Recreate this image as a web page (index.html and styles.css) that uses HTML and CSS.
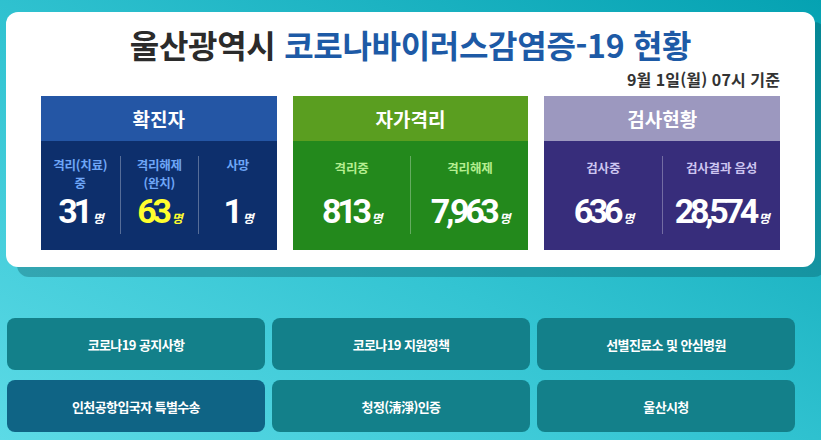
FILE: index.html
```html
<!DOCTYPE html>
<html lang="ko">

<head>
    <meta charset="UTF-8">
    <meta name="viewport" content="width=device-width, initial-scale=1.0">
    <title>울산광역시 코로나바이러스감염증-19 현황</title>
    <link rel="stylesheet" href="styles.css">
</head>

<body>

    <div class="status-card">
        <h1 class="title">울산광역시 <span class="title-blue">코로나바이러스감염증-19 현황</span></h1>
        <p class="base-time">9월 1일(월) 07시 기준</p>

        <div class="stat-row">
            <div class="stat-box confirmed">
                <div class="stat-head">확진자</div>
                <div class="stat-body three">
                    <div class="stat-col">
                        <span class="stat-label">격리(치료)<br>중</span>
                        <span class="stat-num">31<em>명</em></span>
                    </div>
                    <div class="stat-col">
                        <span class="stat-label">격리해제<br>(완치)</span>
                        <span class="stat-num yellow">63<em>명</em></span>
                    </div>
                    <div class="stat-col">
                        <span class="stat-label">사망</span>
                        <span class="stat-num">1<em>명</em></span>
                    </div>
                </div>
            </div>

            <div class="stat-box selfquar">
                <div class="stat-head">자가격리</div>
                <div class="stat-body two">
                    <div class="stat-col">
                        <span class="stat-label">격리중</span>
                        <span class="stat-num">813<em>명</em></span>
                    </div>
                    <div class="stat-col">
                        <span class="stat-label">격리해제</span>
                        <span class="stat-num">7,963<em>명</em></span>
                    </div>
                </div>
            </div>

            <div class="stat-box testing">
                <div class="stat-head">검사현황</div>
                <div class="stat-body two">
                    <div class="stat-col">
                        <span class="stat-label">검사중</span>
                        <span class="stat-num">636<em>명</em></span>
                    </div>
                    <div class="stat-col">
                        <span class="stat-label">검사결과 음성</span>
                        <span class="stat-num">28,574<em>명</em></span>
                    </div>
                </div>
            </div>
        </div>
    </div>

    <div class="link-grid">
        <a class="link-btn" href="#">코로나19 공지사항</a>
        <a class="link-btn" href="#">코로나19 지원정책</a>
        <a class="link-btn" href="#">선별진료소 및 안심병원</a>
        <a class="link-btn dark" href="#">인천공항입국자 특별수송</a>
        <a class="link-btn" href="#">청정(淸淨)인증</a>
        <a class="link-btn" href="#">울산시청</a>
    </div>

</body>

</html>
```

FILE: styles.css
```css
* {
    margin: 0;
    padding: 0;
    box-sizing: border-box;
}

html, body {
    height: 100%;
}

body {
    font-family: 'Noto Sans CJK KR', 'Noto Sans', sans-serif;
    background: linear-gradient(to top right, #5cdae6 0%, #33c4d2 45%, #05a2b2 100%);
    color: #333;
    overflow: hidden;
}

/* 상단 현황 카드 */
.status-card {
    margin: 12px 6px 0 6px;
    padding: 9px 35px 17px 35px;
    background: #fff;
    border-radius: 12px;
    box-shadow: 11px 10px 0 rgba(0, 70, 80, 0.3);
}

.title {
    text-align: center;
    font-size: 32px;
    font-weight: 700;
    line-height: 46.5px;
    color: #2b2b2b;
    letter-spacing: -0.3px;
}

.title-blue {
    color: #1d5aa6;
}

.base-time {
    text-align: right;
    font-size: 16px;
    font-weight: 700;
    line-height: 23.5px;
    color: #333;
    letter-spacing: 0.1px;
}

.stat-row {
    display: grid;
    grid-template-columns: repeat(3, 1fr);
    gap: 16px;
    margin-top: 5px;
}

.stat-box {
    height: 154px;
    display: flex;
    flex-direction: column;
}

.stat-head {
    height: 45px;
    line-height: 45px;
    text-align: center;
    color: #fff;
    font-size: 19px;
    font-weight: 700;
}

.stat-body {
    flex: 1;
    display: grid;
    padding: 15px 0 16px;
}

.stat-body.three {
    grid-template-columns: repeat(3, 1fr);
}

.stat-body.two {
    grid-template-columns: repeat(2, 1fr);
}

.stat-col {
    display: flex;
    flex-direction: column;
    justify-content: space-between;
    align-items: center;
    text-align: center;
    min-width: 0;
}

.stat-col + .stat-col {
    border-left: 1px solid rgba(255, 255, 255, 0.3);
}

.stat-label {
    font-size: 12.5px;
    font-weight: 700;
    line-height: 18.2px;
    letter-spacing: -0.2px;
}

.two .stat-label {
    padding-top: 3px;
}

.stat-num {
    font-family: 'Roboto', 'Noto Sans', sans-serif;
    font-size: 34px;
    font-weight: 700;
    line-height: 32px;
    color: #fff;
    letter-spacing: -4.3px;
}

.stat-num em {
    font-style: italic;
    font-family: 'Noto Sans CJK KR', sans-serif;
    font-size: 12px;
    font-weight: 700;
    letter-spacing: -1.5px;
    margin-left: 4px;
}

.stat-num.yellow {
    color: #ffff2e;
}

.confirmed .stat-head { background: #2456a5; }
.confirmed .stat-body { background: #0d2f6c; }
.confirmed .stat-label { color: #6ea6f7; }

.selfquar .stat-head { background: #5a9e20; }
.selfquar .stat-body { background: #23891c; }
.selfquar .stat-label { color: #b5ee90; }

.testing .stat-head { background: #9c98bf; }
.testing .stat-body { background: #372d7b; }
.testing .stat-label { color: #cdc5f0; }

/* 하단 바로가기 버튼 */
.link-grid {
    display: grid;
    grid-template-columns: repeat(3, 1fr);
    grid-auto-rows: 52px;
    gap: 10px 7px;
    margin: 51px 26px 0 7px;
}

.link-btn {
    display: flex;
    align-items: center;
    justify-content: center;
    background: #13808a;
    border-radius: 8px;
    color: #fff;
    font-size: 13px;
    font-weight: 700;
    text-decoration: none;
    letter-spacing: -0.6px;
}

.link-btn.dark {
    background: #0f6485;
}
```
